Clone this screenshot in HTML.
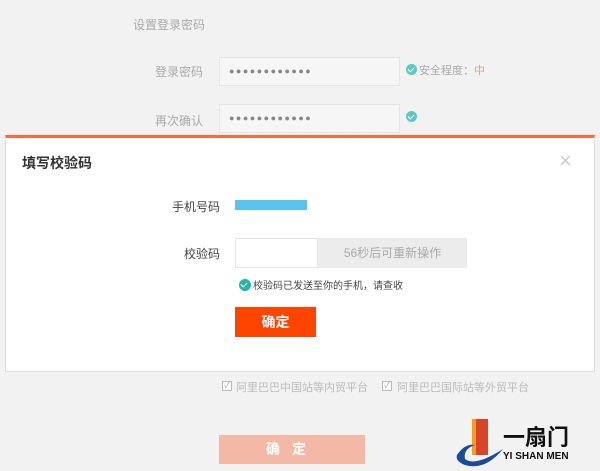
<!DOCTYPE html>
<html><head><meta charset="utf-8"><style>
*{margin:0;padding:0;box-sizing:border-box}
body{width:600px;height:471px;background:#f2f2f2;font-family:"Liberation Sans","Noto Sans CJK SC",sans-serif;position:relative;overflow:hidden;color:#999;font-size:12px}
.a{position:absolute;white-space:nowrap}
.inp{position:absolute;background:#f6f6f6;border:1px solid #e6e6e6}
.dots{position:absolute;left:9px;top:8px;font-size:9px;letter-spacing:1.5px;color:#888}
.ck{position:absolute;width:11px;height:11px;border-radius:50%;background:#5cc9c0}
.ck:after{content:"";position:absolute;left:3px;top:2px;width:3px;height:5px;border:solid #fff;border-width:0 1.5px 1.5px 0;transform:rotate(45deg)}
.cb{position:absolute;width:10px;height:10px;border:1px solid #bbb;background:#fafafa;font-size:8px;line-height:8px;text-align:center;color:#aaa}
</style></head><body>
<div class="a" style="left:133px;top:16px;color:#aaa">设置登录密码</div>
<div class="a" style="left:155px;top:63px;color:#aaa">登录密码</div>
<div class="inp" style="left:219px;top:57px;width:181px;height:29px"><span class="dots">●●●●●●●●●●●●</span></div>
<div class="ck" style="left:406px;top:64px"></div>
<div class="a" style="left:419px;top:62px;font-size:11px;color:#aaa">安全程度：<span style="color:#f5a06a">中</span></div>
<div class="a" style="left:155px;top:112px;color:#aaa">再次确认</div>
<div class="inp" style="left:219px;top:104px;width:181px;height:29px"><span class="dots">●●●●●●●●●●●●</span></div>
<div class="ck" style="left:406px;top:111px"></div>

<div class="a" style="left:5px;top:135px;width:590px;height:237px;background:#fff;border:1px solid #ddd;border-top:3px solid #ff6a3a"></div>
<div class="a" style="left:22px;top:153px;font-size:14px;font-weight:bold;color:#333">填写校验码</div>
<div class="a" style="left:559px;top:148px;font-size:22px;color:#ccc">×</div>
<div class="a" style="left:172px;top:198px;color:#444">手机号码</div>
<div class="a" style="left:235px;top:200px;width:72px;height:10px;background:#5bc4ee"></div>
<div class="a" style="left:184px;top:245px;color:#444">校验码</div>
<div class="a" style="left:235px;top:238px;width:83px;height:30px;background:#fff;border:1px solid #e6e6e6"></div>
<div class="a" style="left:318px;top:238px;width:149px;height:30px;background:#ececec;color:#aaa;text-align:center;line-height:30px">56秒后可重新操作</div>
<div class="ck" style="left:239px;top:279px;width:12px;height:12px;background:#26b5a8"></div>
<div class="a" style="left:253px;top:277px;font-size:10px;color:#444">校验码已发送至你的手机，请查收</div>
<div class="a" style="left:235px;top:307px;width:81px;height:30px;background:#ff4400;color:#fff;font-weight:bold;font-size:14px;text-align:center;line-height:30px">确定</div>

<div class="cb" style="left:222px;top:381px">✓</div>
<div class="a" style="left:236px;top:379px;font-size:11px;color:#bbb">阿里巴巴中国站等内贸平台</div>
<div class="cb" style="left:382px;top:381px">✓</div>
<div class="a" style="left:397px;top:379px;font-size:11px;color:#bbb">阿里巴巴国际站等外贸平台</div>
<div class="a" style="left:219px;top:435px;width:146px;height:29px;background:#f4b9a6;color:#fff;font-size:14px;font-weight:bold;text-align:center;line-height:29px;letter-spacing:12px">确定</div>

<svg class="a" style="left:455px;top:415px" width="135" height="55" viewBox="0 0 135 55">
<rect x="17" y="4" width="16" height="36" fill="#d8432a"/>
<rect x="17" y="4" width="4" height="36" fill="#f0a020"/>
<path d="M2 40 Q10 28 20 30 Q8 34 10 44 Q20 52 48 34 Q30 56 10 50 Q0 46 2 40Z" fill="#1a4a9a"/>
<text x="48" y="30" font-size="22" font-weight="bold" fill="#111" font-family="Noto Sans CJK SC,sans-serif">一扇门</text>
<text x="48" y="44" font-size="10" font-weight="bold" fill="#111" font-family="Liberation Sans,sans-serif">YI SHAN MEN</text>
</svg>
</body></html>
